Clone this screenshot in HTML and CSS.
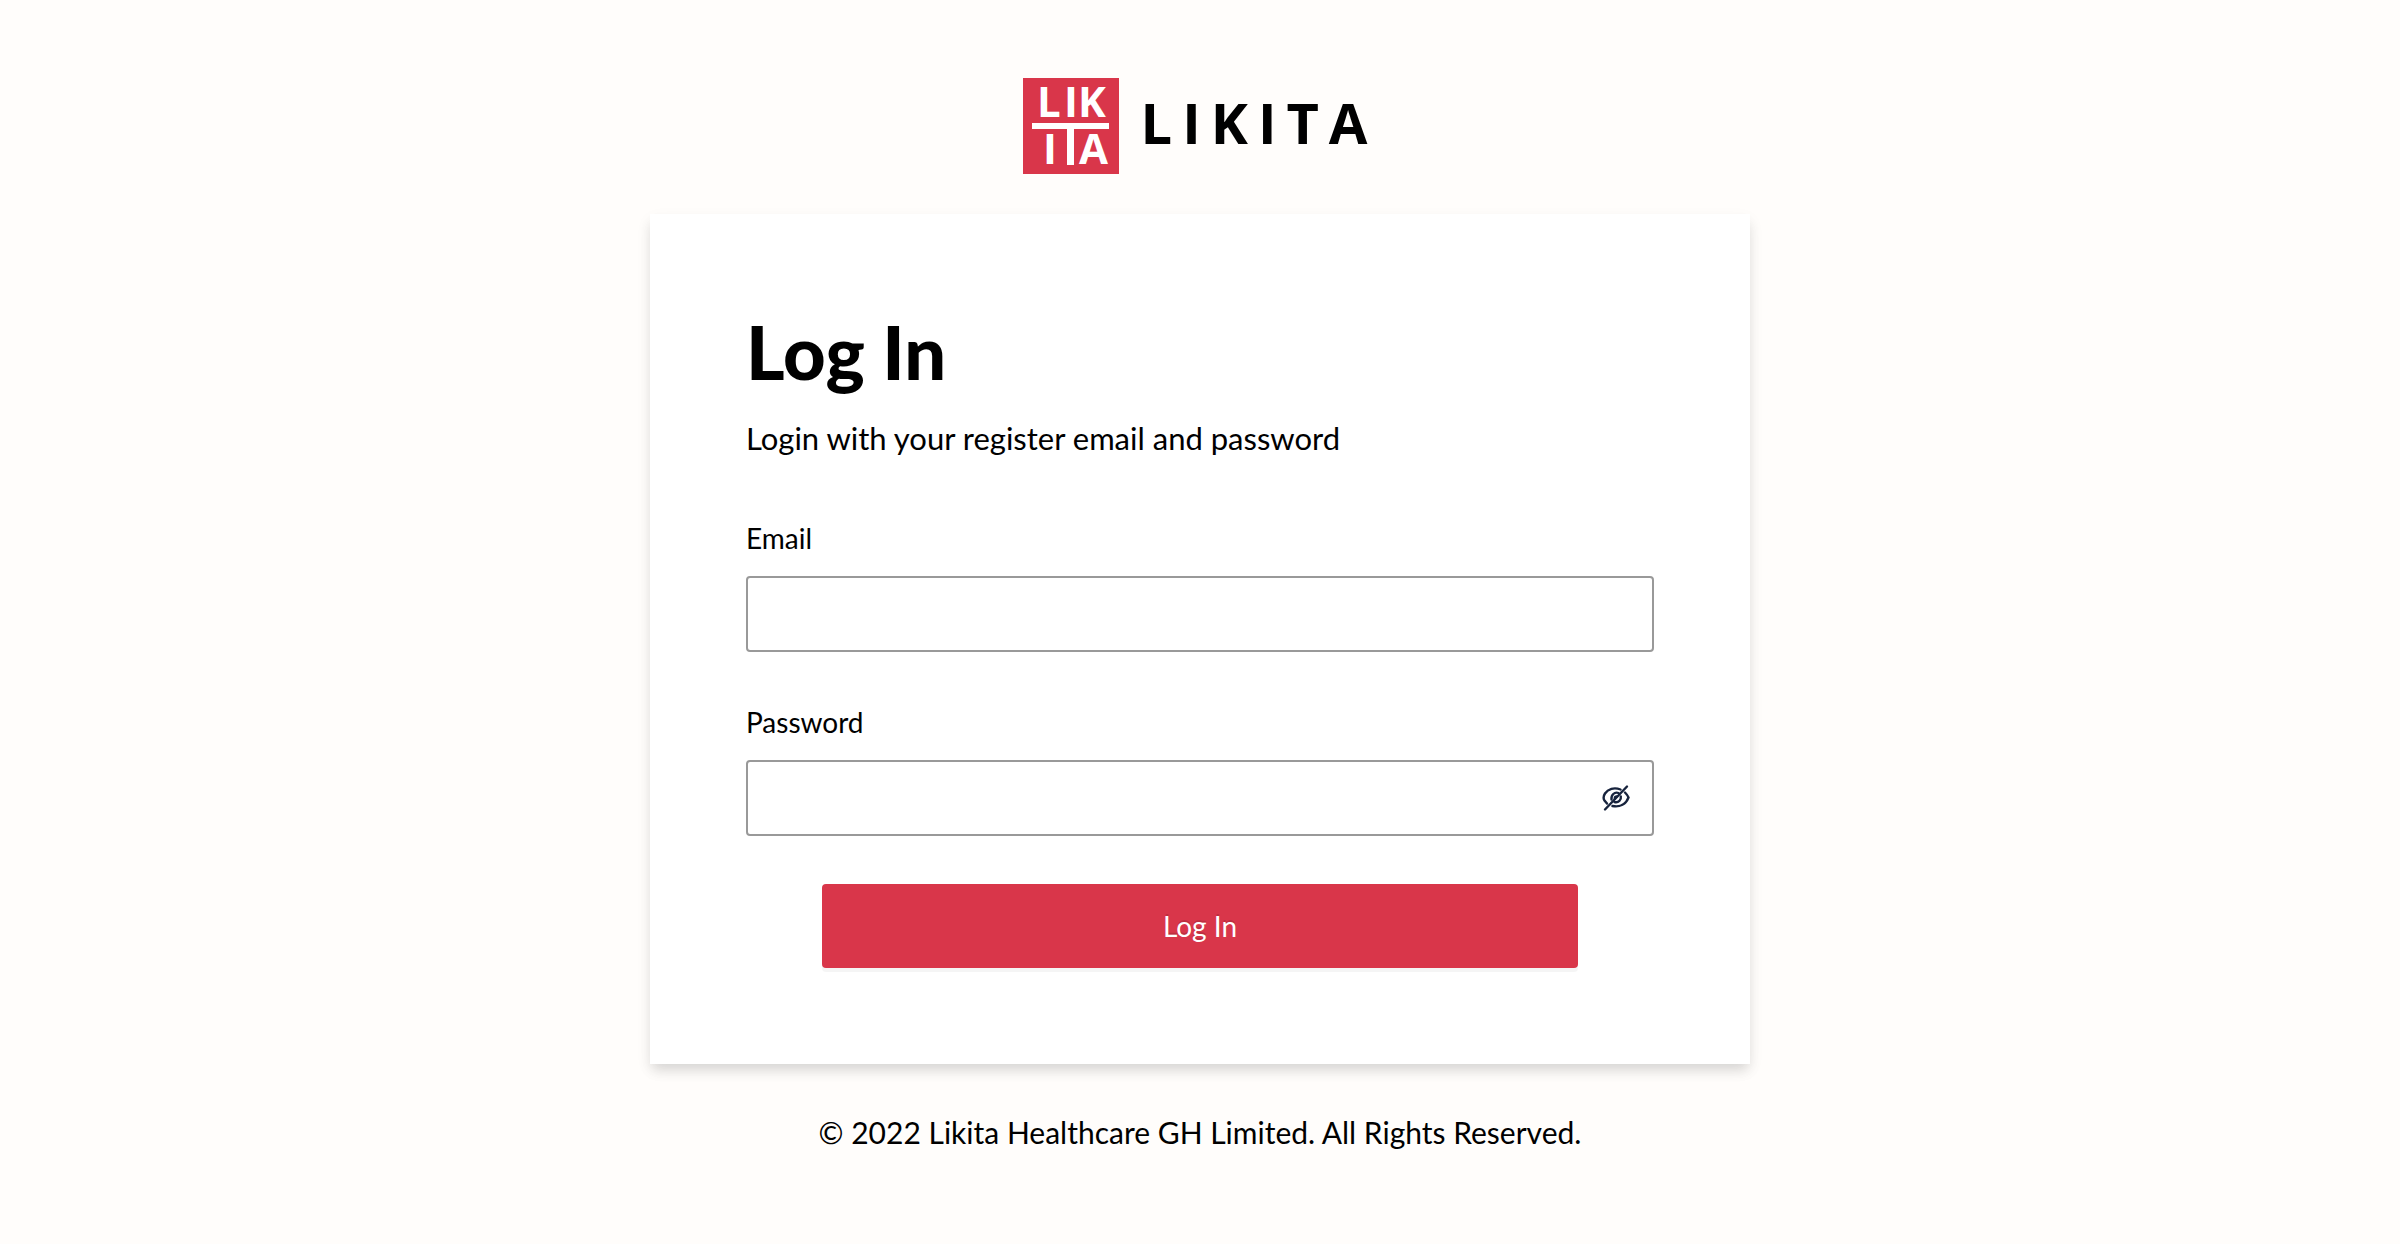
FILE: index.html
```html
<!DOCTYPE html>
<html lang="en">
<head>
  <meta charset="utf-8">
  <meta name="viewport" content="width=device-width, initial-scale=1">
  <title>Log In - Likita</title>
  <link rel="stylesheet" href="styles.css">
</head>
<body>
  <main class="page">
    <header class="brand">
      <svg class="brand-mark" viewBox="0 0 96 96" aria-hidden="true">
        <rect class="brand-tile" width="96" height="96"/>
        <text class="brand-letter" x="14 41 55" y="39">LIK</text>
        <path class="brand-bar" d="M9 45h77v6H51v36h-7V51H9z"/>
        <text class="brand-letter" x="20 56" y="86">IA</text>
      </svg>
      <span class="brand-name">LIKITA</span>
    </header>

    <section class="card">
      <h1 class="title">Log In</h1>
      <p class="subtitle">Login with your register email and password</p>
      <form class="form">
        <div class="field">
          <label class="label" for="email">Email</label>
          <div class="control">
            <input class="input" id="email" name="email" type="email">
          </div>
        </div>
        <div class="field">
          <label class="label" for="password">Password</label>
          <div class="control">
            <input class="input" id="password" name="password" type="password">
            <button class="reveal" type="button" aria-label="Show password">
              <svg class="reveal-icon" viewBox="0 0 28 28" aria-hidden="true">
                <path d="M18.500 5.500C12 3 6 5 3 9.500Q.500 13.500 2.500 16.500L5 19.500M23 8.500Q25.500 11 26.500 13.500C24 20 18 23.500 10.500 22"/>
                <path d="M16.500 9C12.500 7.500 9 11 9.500 15.500M18.800 12.500C19.500 16 16.500 19 12.500 18M15 12.500Q12.800 12.500 12.800 14.500"/>
                <path d="M25 2.500L3 25.500"/>
              </svg>
            </button>
          </div>
        </div>
        <button class="submit" type="submit">Log In</button>
      </form>
    </section>

    <footer class="footer">© 2022 Likita Healthcare GH Limited. All Rights Reserved.</footer>
  </main>
</body>
</html>
```
FILE: styles.css
```css
* {
  box-sizing: border-box;
}

body {
  margin: 0;
  background: #fffdfb;
  color: #000;
  font-family: Lato, "Open Sans", sans-serif;
}

.page {
  display: flex;
  flex-direction: column;
  align-items: center;
  min-height: 100vh;
  padding: 78px 24px;
}

.brand {
  display: flex;
  align-items: flex-start;
  gap: 22px;
  margin-bottom: 40px;
}

.brand-mark {
  width: 96px;
  height: 96px;
  overflow: visible;
}

.brand-tile {
  fill: #d9364a;
}

.brand-bar {
  fill: #fff;
}

.brand-letter {
  fill: #fff;
  font-family: "Open Sans", sans-serif;
  font-size: 42px;
  font-weight: 700;
}

.brand-name {
  font-family: "Open Sans", sans-serif;
  font-size: 56px;
  font-weight: 700;
  line-height: 88px;
  letter-spacing: 10px;
}

.card {
  width: 100%;
  max-width: 1100px;
  padding: 96px;
  background: #fff;
  box-shadow: 0 8px 12px -2px rgba(0, 0, 0, 0.12), 0 6px 16px rgba(0, 0, 0, 0.05);
}

.title {
  margin: 0 0 24px;
  font-size: 74px;
  font-weight: 900;
  line-height: 84px;
}

.subtitle {
  margin: 0 0 60px;
  font-size: 31px;
  line-height: 40px;
}

.form {
  display: flex;
  flex-direction: column;
}

.field {
  display: flex;
  flex-direction: column;
  gap: 18px;
}

.field + .field {
  margin-top: 50px;
}

.label {
  font-size: 28px;
  line-height: 40px;
}

.control {
  display: flex;
  align-items: center;
  height: 76px;
  border: 2px solid #999;
  border-radius: 4px;
}

.control:focus-within {
  border-color: #d9364a;
}

.input {
  flex: 1;
  min-width: 0;
  height: 100%;
  padding: 0 22px;
  border: 0;
  outline: 0;
  background: transparent;
  font: inherit;
  font-size: 28px;
}

.reveal {
  display: flex;
  margin-right: 22px;
  padding: 0;
  border: 0;
  background: transparent;
  cursor: pointer;
}

.reveal-icon {
  width: 28px;
  height: 28px;
  fill: none;
  stroke: #17233d;
  stroke-width: 2.4;
  stroke-linecap: round;
}

.submit {
  align-self: center;
  width: 100%;
  max-width: 756px;
  height: 84px;
  margin-top: 48px;
  border: 0;
  border-radius: 4px;
  background: #d9364a;
  box-shadow: 0 4px 0 rgba(0, 0, 0, 0.04);
  color: #fff;
  font: inherit;
  font-size: 28px;
  text-shadow: 0 -2px 0 rgba(0, 0, 0, 0.12);
  cursor: pointer;
}

.footer {
  margin-top: 48px;
  font-size: 30px;
  line-height: 40px;
  text-align: center;
}
```
